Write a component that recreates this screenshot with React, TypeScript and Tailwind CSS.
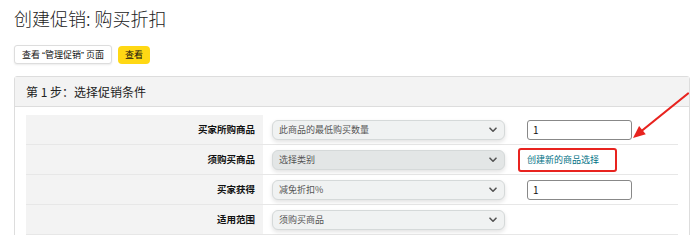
import React from "react";

const rows = [
  { label: "买家所购商品", select: "此商品的最低购买数量", extra: "input" },
  { label: "须购买商品", select: "选择类别", extra: "link", dark: true },
  { label: "买家获得", select: "减免折扣%", extra: "input" },
  { label: "适用范围", select: "须购买商品", extra: null },
];

function Chevron() {
  return (
    <svg width="8" height="6" viewBox="0 0 8 6" className="shrink-0">
      <path d="M1 1.2l3 3 3-3" fill="none" stroke="#555" strokeWidth="1.6" strokeLinecap="round" strokeLinejoin="round" />
    </svg>
  );
}

export default function App() {
  return (
    <div className="relative h-[235px] w-[692px] overflow-hidden bg-white font-['Noto_Sans_CJK_SC',sans-serif] text-[#333]">
      <div className="pl-[14px] pt-[6px]">
        <h1 className="text-[18px] font-light leading-[24px] text-[#222]">创建促销: 购买折扣</h1>

        <div className="mt-[15px] flex items-center gap-[6px]">
          <button className="h-[19px] rounded-[3px] border border-[#ddd] bg-white px-[7px] text-[9px] leading-none text-[#111] shadow-[0_1px_2px_rgba(0,0,0,0.08)]">
            查看 <span className="font-['Liberation_Sans']">“</span>管理促销<span className="font-['Liberation_Sans']">”</span> 页面
          </button>
          <button className="h-[18px] rounded-[4px] bg-[#ffd814] px-[7px] text-[9px] leading-none text-[#111]">
            查看
          </button>
        </div>

        <div className="mr-[2px] mt-[12px] rounded-t-[3px] border border-[#ddd]">
          <div className="flex h-[30px] items-center border-b border-[#ddd] bg-[#f3f3f3] px-[11px] text-[12px] text-[#222]">
            第 1 步：选择促销条件
          </div>
          <div className="px-[11px] pt-[8px]">
            {rows.map((r) => (
              <div key={r.label} className="grid h-[30px] grid-cols-[237px_1fr] border-b border-[#e7e7e7]">
                <div className="flex items-center justify-end bg-[#f3f3f3] pr-[8px] text-[9.5px] font-bold text-[#111]">
                  {r.label}
                </div>
                <div className="flex items-center pl-[9px]">
                  <div
                    className={`flex h-[20px] w-[233px] items-center justify-between rounded-[6px] border border-[#d5d9d9] pl-[6px] pr-[7px] text-[9px] text-[#555] shadow-[0_2px_4px_rgba(15,17,17,0.12)] ${
                      r.dark ? "bg-[#e3e6e6]" : "bg-[#f0f2f2]"
                    }`}
                  >
                    <span>{r.select}</span>
                    <Chevron />
                  </div>
                  {r.extra === "input" && (
                    <div className="ml-[22px] flex h-[20px] w-[105px] items-center rounded-[3px] border border-[#888] bg-white pl-[5px] text-[10px] text-[#111]">
                      1
                    </div>
                  )}
                  {r.extra === "link" && (
                    <div className="ml-[13px] flex h-[24px] w-[99px] items-center rounded-[3px] border-2 border-[#e8231f] pl-[7px] text-[9px] text-[#007185]">
                      创建新的商品选择
                    </div>
                  )}
                </div>
              </div>
            ))}
          </div>
        </div>
      </div>

      <svg className="pointer-events-none absolute left-0 top-0" width="692" height="235" viewBox="0 0 692 235">
        <path d="M688 93.5 L641.5 131" stroke="#e8231f" strokeWidth="2.2" strokeLinecap="round" />
        <polygon points="633,138 645.8,134.2 639.1,126" fill="#e8231f" />
      </svg>
    </div>
  );
}
